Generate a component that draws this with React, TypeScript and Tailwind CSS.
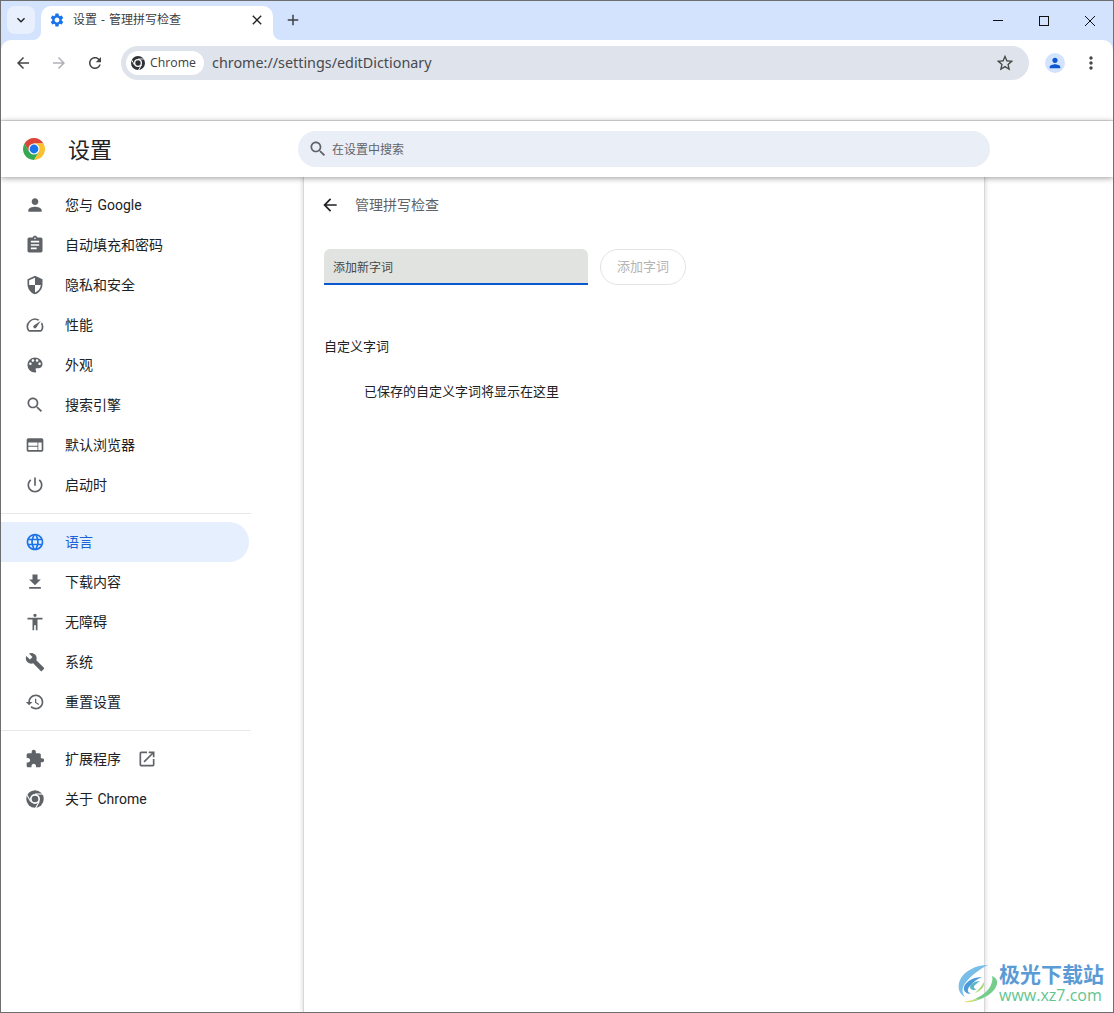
import { ReactNode } from 'react';

const Icon = ({ d, className = '' }: { d: string; className?: string }) => (
  <svg viewBox="0 0 24 24" fill="currentColor" className={className}>
    <path d={d} />
  </svg>
);

const paths = {
  person: 'M12 12c2.21 0 4-1.79 4-4s-1.79-4-4-4-4 1.79-4 4 1.79 4 4 4zm0 2c-2.67 0-8 1.34-8 4v2h16v-2c0-2.66-5.33-4-8-4z',
  assignment: 'M19 3h-4.18C14.4 1.84 13.3 1 12 1c-1.3 0-2.4.84-2.82 2H5c-1.1 0-2 .9-2 2v14c0 1.1.9 2 2 2h14c1.1 0 2-.9 2-2V5c0-1.1-.9-2-2-2zm-7 0c.55 0 1 .45 1 1s-.45 1-1 1-1-.45-1-1 .45-1 1-1zm2 14H7v-2h7v2zm3-4H7v-2h10v2zm0-4H7V7h10v2z',
  shield: 'M12 1L3 5v6c0 5.55 3.84 10.74 9 12 5.16-1.26 9-6.45 9-12V5l-9-4zm0 10.99h7c-.53 4.12-3.28 7.79-7 8.94V12H5V6.3l7-3.11v8.8z',
  speed: 'M20.38 8.57l-1.23 1.85a8 8 0 0 1-.22 7.58H5.07A8 8 0 0 1 15.58 6.85l1.85-1.23A10 10 0 0 0 3.35 19a2 2 0 0 0 1.72 1h13.85a2 2 0 0 0 1.74-1 10 10 0 0 0-.27-10.44zm-9.79 6.84a2 2 0 0 0 2.83 0l5.66-8.49-8.49 5.66a2 2 0 0 0 0 2.83z',
  palette: 'M12 3c-4.97 0-9 4.03-9 9s4.03 9 9 9c.83 0 1.5-.67 1.5-1.5 0-.39-.15-.74-.39-1.01-.23-.26-.38-.61-.38-.99 0-.83.67-1.5 1.5-1.5H16c2.76 0 5-2.24 5-5 0-4.42-4.03-8-9-8zm-5.5 9c-.83 0-1.5-.67-1.5-1.5S5.67 9 6.5 9 8 9.67 8 10.5 7.33 12 6.5 12zm3-4C8.67 8 8 7.33 8 6.5S8.67 5 9.5 5s1.5.67 1.5 1.5S10.33 8 9.5 8zm5 0c-.83 0-1.5-.67-1.5-1.5S13.67 5 14.5 5s1.5.67 1.5 1.5S15.33 8 14.5 8zm3 4c-.83 0-1.5-.67-1.5-1.5S16.67 9 17.5 9s1.5.67 1.5 1.5-.67 1.5-1.5 1.5z',
  search: 'M15.5 14h-.79l-.28-.27C15.41 12.59 16 11.11 16 9.5 16 5.91 13.09 3 9.5 3S3 5.91 3 9.5 5.91 16 9.5 16c1.61 0 3.09-.59 4.23-1.57l.27.28v.79l5 4.99L20.49 19l-4.99-5zm-6 0C7.01 14 5 11.99 5 9.5S7.01 5 9.5 5 14 7.01 14 9.5 11.99 14 9.5 14z',
  web: 'M20 4H4c-1.1 0-2 .9-2 2v12c0 1.1.9 2 2 2h16c1.1 0 2-.9 2-2V6c0-1.1-.9-2-2-2zm-5 14H4v-4h11v4zm0-5H4V9h11v4zm5 5h-4V9h4v9z',
  power: 'M13 3h-2v10h2V3zm4.83 2.17l-1.42 1.42C17.99 7.86 19 9.81 19 12c0 3.87-3.13 7-7 7s-7-3.13-7-7c0-2.19 1.01-4.14 2.58-5.42L6.17 5.17C4.23 6.82 3 9.26 3 12c0 4.97 4.03 9 9 9s9-4.03 9-9c0-2.74-1.23-5.18-3.17-6.83z',
  language: 'M11.99 2C6.47 2 2 6.48 2 12s4.47 10 9.99 10C17.52 22 22 17.52 22 12S17.52 2 11.99 2zm6.93 6h-2.95c-.32-1.25-.78-2.45-1.38-3.56 1.84.63 3.37 1.91 4.33 3.56zM12 4.04c.83 1.2 1.48 2.53 1.91 3.96h-3.82c.43-1.43 1.08-2.76 1.91-3.96zM4.26 14C4.1 13.36 4 12.69 4 12s.1-1.36.26-2h3.38c-.08.66-.14 1.32-.14 2 0 .68.06 1.34.14 2H4.26zm.82 2h2.95c.32 1.25.78 2.45 1.38 3.56-1.84-.63-3.37-1.9-4.33-3.56zm2.95-8H5.08c.96-1.66 2.49-2.93 4.33-3.56C8.81 5.55 8.35 6.75 8.03 8zM12 19.96c-.83-1.2-1.48-2.53-1.91-3.96h3.82c-.43 1.43-1.08 2.76-1.91 3.96zM14.34 14H9.66c-.09-.66-.16-1.32-.16-2 0-.68.07-1.35.16-2h4.68c.09.65.16 1.32.16 2 0 .68-.07 1.34-.16 2zm.25 5.56c.6-1.11 1.06-2.31 1.38-3.56h2.95c-.96 1.65-2.49 2.93-4.33 3.56zM16.36 14c.08-.66.14-1.32.14-2 0-.68-.06-1.34-.14-2h3.38c.16.64.26 1.31.26 2s-.1 1.36-.26 2h-3.38z',
  download: 'M19 9h-4V3H9v6H5l7 7 7-7zM5 18v2h14v-2H5z',
  accessibility: 'M12 2c1.1 0 2 .9 2 2s-.9 2-2 2-2-.9-2-2 .9-2 2-2zm9 7h-6v13h-2v-6h-2v6H9V9H3V7h18v2z',
  build: 'M22.7 19l-9.1-9.1c.9-2.3.4-5-1.5-6.9-2-2-5-2.4-7.4-1.3L9 6 6 9 1.6 4.7C.4 7.1.9 10.1 2.9 12.1c1.9 1.9 4.6 2.4 6.9 1.5l9.1 9.1c.4.4 1 .4 1.4 0l2.3-2.3c.5-.4.5-1.1.1-1.4z',
  restore: 'M13 3c-4.97 0-9 4.03-9 9H1l3.89 3.89.07.14L9 12H6c0-3.87 3.13-7 7-7s7 3.13 7 7-3.13 7-7 7c-1.93 0-3.68-.79-4.94-2.06l-1.42 1.42C8.27 19.99 10.51 21 13 21c4.97 0 9-4.03 9-9s-4.03-9-9-9zm-1 5v5l4.28 2.54.72-1.21-3.5-2.08V8H12z',
  extension: 'M20.5 11H19V7c0-1.1-.9-2-2-2h-4V3.5C13 2.12 11.88 1 10.5 1S8 2.12 8 3.5V5H4c-1.1 0-1.99.9-1.99 2v3.8H3.5c1.49 0 2.7 1.21 2.7 2.7s-1.21 2.7-2.7 2.7H2V20c0 1.1.9 2 2 2h3.8v-1.5c0-1.49 1.21-2.7 2.7-2.7 1.49 0 2.7 1.21 2.7 2.7V22H17c1.1 0 2-.9 2-2v-4h1.5c1.38 0 2.5-1.12 2.5-2.5S21.88 11 20.5 11z',
  openInNew: 'M19 19H5V5h7V3H5c-1.11 0-2 .9-2 2v14c0 1.1.89 2 2 2h14c1.1 0 2-.9 2-2v-7h-2v7zM14 3v2h3.59l-9.83 9.83 1.41 1.41L19 6.41V10h2V3h-7z',
  back: 'M20 11H7.83l5.59-5.59L12 4l-8 8 8 8 1.41-1.41L7.83 13H20v-2z',
  forward: 'M12 4l-1.41 1.41L16.17 11H4v2h12.17l-5.58 5.59L12 20l8-8z',
  reload: 'M17.65 6.35C16.2 4.9 14.21 4 12 4c-4.42 0-7.99 3.58-7.99 8s3.57 8 7.99 8c3.73 0 6.84-2.55 7.73-6h-2.08c-.82 2.33-3.04 4-5.65 4-3.31 0-6-2.69-6-6s2.69-6 6-6c1.66 0 3.14.69 4.22 1.78L13 11h7V4l-2.35 2.35z',
  star: 'M22 9.24l-7.19-.62L12 2 9.19 8.63 2 9.24l5.46 4.73L5.82 21 12 17.27 18.18 21l-1.63-7.03L22 9.24zM12 15.4l-3.76 2.27 1-4.28-3.32-2.88 4.38-.38L12 6.1l1.71 4.04 4.38.38-3.32 2.88 1 4.28L12 15.4z',
  gear: 'M19.14 12.94c.04-.3.06-.61.06-.94 0-.32-.02-.64-.07-.94l2.03-1.58c.18-.14.23-.41.12-.61l-1.92-3.32c-.12-.22-.37-.29-.59-.22l-2.39.96c-.5-.38-1.03-.7-1.62-.94l-.36-2.54c-.04-.24-.24-.41-.48-.41h-3.84c-.24 0-.43.17-.47.41l-.36 2.54c-.59.24-1.13.57-1.62.94l-2.39-.96c-.22-.08-.47 0-.59.22L2.74 8.87c-.12.21-.08.47.12.61l2.03 1.58c-.05.3-.09.63-.09.94s.02.64.07.94l-2.03 1.58c-.18.14-.23.41-.12.61l1.92 3.32c.12.22.37.29.59.22l2.39-.96c.5.38 1.03.7 1.62.94l.36 2.54c.05.24.24.41.48.41h3.84c.24 0 .44-.17.47-.41l.36-2.54c.59-.24 1.13-.56 1.62-.94l2.39.96c.22.08.47 0 .59-.22l1.92-3.32c.12-.22.07-.47-.12-.61l-2.01-1.58zM12 15.6c-1.98 0-3.6-1.62-3.6-3.6s1.62-3.6 3.6-3.6 3.6 1.62 3.6 3.6-1.62 3.6-3.6 3.6z',
  close: 'M19 6.41L17.59 5 12 10.59 6.41 5 5 6.41 10.59 12 5 17.59 6.41 19 12 13.41 17.59 19 19 17.59 13.41 12z',
  plus: 'M19 13h-6v6h-2v-6H5v-2h6V5h2v6h6v2z',
  chevron: 'M7.41 8.59L12 13.17l4.59-4.58L18 10l-6 6-6-6z',
  dots: 'M12 8c1.1 0 2-.9 2-2s-.9-2-2-2-2 .9-2 2 .9 2 2 2zm0 2c-1.1 0-2 .9-2 2s.9 2 2 2 2-.9 2-2-.9-2-2-2zm0 6c-1.1 0-2 .9-2 2s.9 2 2 2 2-.9 2-2-.9-2-2-2z',
};

const ChromeLogo = ({ className = '' }: { className?: string }) => (
  <svg viewBox="0 0 48 48" className={className}>
    <path fill="#db4437" d="M4.95 13A22 22 0 0 1 43.05 13H24L14.47 29.5Z" />
    <path fill="#fbc02d" d="M43.05 13A22 22 0 0 1 24 46L33.53 29.5 24 13Z" />
    <path fill="#34a853" d="M24 46A22 22 0 0 1 4.95 13L14.47 29.5H33.53Z" />
    <circle cx="24" cy="24" r="11" fill="#fff" />
    <circle cx="24" cy="24" r="8.8" fill="#1a73e8" />
  </svg>
);

// single colour chrome mark, same one in the omnibox chip and the sidebar
const ChromeMono = ({ className = '' }: { className?: string }) => (
  <svg viewBox="0 0 24 24" className={className}>
    <circle cx="12" cy="12" r="10.5" fill="currentColor" />
    <circle cx="12" cy="12" r="6" fill="#fff" />
    <circle cx="12" cy="12" r="4" fill="currentColor" />
    <path d="M12 6H22" stroke="#fff" strokeWidth="1.3" />
    <path d="M12 6H22" stroke="#fff" strokeWidth="1.3" transform="rotate(120 12 12)" />
    <path d="M12 6H22" stroke="#fff" strokeWidth="1.3" transform="rotate(240 12 12)" />
  </svg>
);

type NavEntry = { label: string; icon: ReactNode; active?: boolean; external?: boolean };

const iconCls = 'w-5 h-5';
const groupOne: NavEntry[] = [
  { label: '您与 Google', icon: <Icon d={paths.person} className={iconCls} /> },
  { label: '自动填充和密码', icon: <Icon d={paths.assignment} className={iconCls} /> },
  { label: '隐私和安全', icon: <Icon d={paths.shield} className={iconCls} /> },
  { label: '性能', icon: <Icon d={paths.speed} className={iconCls} /> },
  { label: '外观', icon: <Icon d={paths.palette} className={iconCls} /> },
  { label: '搜索引擎', icon: <Icon d={paths.search} className={iconCls} /> },
  { label: '默认浏览器', icon: <Icon d={paths.web} className={iconCls} /> },
  { label: '启动时', icon: <Icon d={paths.power} className={iconCls} /> },
];
const groupTwo: NavEntry[] = [
  { label: '语言', icon: <Icon d={paths.language} className={iconCls} />, active: true },
  { label: '下载内容', icon: <Icon d={paths.download} className={iconCls} /> },
  { label: '无障碍', icon: <Icon d={paths.accessibility} className={iconCls} /> },
  { label: '系统', icon: <Icon d={paths.build} className={iconCls} /> },
  { label: '重置设置', icon: <Icon d={paths.restore} className={iconCls} /> },
];
const groupThree: NavEntry[] = [
  { label: '扩展程序', icon: <Icon d={paths.extension} className={iconCls} />, external: true },
  { label: '关于 Chrome', icon: <ChromeMono className={iconCls} /> },
];

const NavItem = ({ item }: { item: NavEntry }) => (
  <div
    className={`flex items-center h-10 w-[248px] pl-[24px] rounded-r-full text-sm [word-spacing:1px] font-['Roboto','Noto_Sans_CJK_SC',sans-serif] ${
      item.active ? 'bg-[#e6effd] text-[#1a62d6]' : 'text-[#202124]'
    }`}
  >
    <span className={`flex items-center justify-center w-5 h-5 ${item.active ? 'text-[#1a73e8]' : 'text-[#5f6368]'}`}>
      {item.icon}
    </span>
    <span className="ml-[20px]">{item.label}</span>
    {item.external && <Icon d={paths.openInNew} className="w-5 h-5 ml-[16px] text-[#5f6368]" />}
  </div>
);

const Divider = () => <div className="h-px w-[250px] bg-[#e8e8e8]" />;

const Watermark = () => (
  <div className="absolute right-[9px] bottom-[4px] flex items-center">
    <svg viewBox="0 0 50 50" className="w-[50px] h-[50px] -mr-[3px]">
      <path fill="#79bde9" d="M36 7C24 7 12 13 8 22 5 29 7 36 13 39 9 34 10 28 15 23 20 17 28 11 36 7Z" />
      <path fill="#4c9bd8" d="M30 19C22 19 14 23 12 29 11 33 14 36 19 36 15 34 15 31 18 28 21 24 25 21 30 19Z" />
      <path fill="#5fb6c9" d="M28 23C23 23 18 26 18 29 18 32 22 33 25 31 22 31 21 29 23 27Z" />
      <path fill="#74cd8c" d="M40 18C46 20 47 26 42 32 36 39 26 43 17 44 25 40 34 36 38 29 40 25 41 21 40 18Z" />
      <path fill="#a4d873" d="M32 24C33 29 28 33 23 35 27 31 30 28 32 24Z" />
      <path fill="#d6e36a" d="M28 40C23 43 17 45 12 44 15 43 21 42 28 40Z" />
    </svg>
    <div className="flex flex-col">
      <div className="text-[21px] leading-[24px] font-bold text-[#5b9bd5]">极光下载站</div>
      <div className="text-[16px] leading-[18px] font-medium text-[#62c48f] font-['Open_Sans',sans-serif]">www.xz7.com</div>
    </div>
  </div>
);

const App = () => {
  return (
    <div className="relative w-[1114px] h-[1013px] overflow-hidden border border-[#6e6e6e] bg-white flex flex-col font-['Noto_Sans','Noto_Sans_CJK_SC',sans-serif]">
      {/* stray pixels on the window edge */}
      <div className="absolute -left-px top-[124px] w-px h-[16px] bg-[#9a2b3a]" />

      {/* tab strip */}
      <div className="h-[39px] bg-[#d3e3fd] flex items-end shrink-0 pl-[6px]">
        <div className="mb-[6px] w-7 h-7 rounded-lg bg-[#e8f0fe] flex items-center justify-center text-[#202124]">
          <Icon d={paths.chevron} className="w-4 h-4" />
        </div>
        <div className="relative ml-[6px] w-[232px] h-[34px] bg-white rounded-t-[10px] flex items-center pl-[8px] pr-[8px] pb-[6px]">
          <span className="absolute -left-[8px] bottom-0 w-2 h-2 bg-white">
            <span className="block w-2 h-2 bg-[#d3e3fd] rounded-br-[8px]" />
          </span>
          <span className="absolute -right-[8px] bottom-0 w-2 h-2 bg-white">
            <span className="block w-2 h-2 bg-[#d3e3fd] rounded-bl-[8px]" />
          </span>
          <Icon d={paths.gear} className="w-4 h-4 text-[#1a73e8]" />
          <span className="ml-[8px] text-xs text-[#3c4043] flex-1 [word-spacing:1px]">设置 - 管理拼写检查</span>
          <Icon d={paths.close} className="w-4 h-4 text-[#202124]" />
        </div>
        <Icon d={paths.plus} className="mb-[11px] ml-[11px] w-[18px] h-[18px] text-[#3c4043]" />
        <div className="flex-1" />
        <div className="flex items-center h-full text-[#202124]">
          <div className="w-[46px] flex justify-center">
            <span className="block w-[10px] h-px bg-[#111]" />
          </div>
          <div className="w-[46px] flex justify-center">
            <span className="block w-[10px] h-[10px] border border-[#111]" />
          </div>
          <div className="w-[46px] flex justify-center">
            <svg viewBox="0 0 10 10" className="w-[10px] h-[10px]" stroke="#111" strokeWidth="1">
              <path d="M0 0L10 10M10 0L0 10" />
            </svg>
          </div>
        </div>
      </div>

      {/* toolbar */}
      <div className="bg-[#d3e3fd] shrink-0">
        <div className="bg-white rounded-t-[10px] h-[81px] border-b border-[#e0e0e0]">
          <div className="h-[46px] flex items-center pl-[10px]">
            <div className="flex items-center gap-[12px] text-[#444746]">
              <Icon d={paths.back} className="w-[24px] h-[24px] p-[3px]" />
              <Icon d={paths.forward} className="w-[24px] h-[24px] p-[3px] text-[#b0b2b6]" />
              <Icon d={paths.reload} className="w-[24px] h-[24px] p-[3px]" />
            </div>
            <div className="ml-[14px] w-[908px] h-[34px] rounded-full bg-[#dfe3eb] flex items-center pl-[5px] pr-[14px]">
              <div className="h-[24px] w-[78px] rounded-full bg-white flex items-center pl-[4px] text-[12.3px] text-[#3c4043]">
                <ChromeMono className="w-4 h-4 text-[#303134]" />
                <span className="ml-[4px] pt-px font-['Open_Sans',sans-serif]">Chrome</span>
              </div>
              <span className="ml-[8px] flex-1 text-[14.35px] text-[#474a4f]">chrome://settings/editDictionary</span>
              <Icon d={paths.star} className="w-5 h-5 text-[#444746]" />
            </div>
            <div className="ml-[16px] w-5 h-5 rounded-full bg-[#d3e3fd] flex items-center justify-center">
              <Icon d={paths.person} className="w-4 h-4 text-[#0b57d0]" />
            </div>
            <Icon d={paths.dots} className="ml-[16px] w-5 h-5 text-[#444746]" />
          </div>
        </div>
      </div>

      {/* settings header */}
      <div className="relative z-10 h-[56px] shrink-0 bg-white flex items-center pl-[21px] shadow-[0_1px_6px_rgba(0,0,0,0.4)]">
        <ChromeLogo className="w-6 h-6" />
        <span className="ml-[22px] text-[22px] text-[#202124]">设置</span>
        <div className="ml-[186px] w-[692px] h-[36px] rounded-full bg-[#eaeef7] flex items-center pl-[10px]">
          <Icon d={paths.search} className="w-[20px] h-[20px] text-[#5f6368]" />
          <span className="ml-[4px] pt-[2px] text-xs text-[#5f6368]">在设置中搜索</span>
        </div>
      </div>

      {/* body */}
      <div className="flex flex-1 min-h-0">
        <aside className="w-[302px] shrink-0 pt-[8px] flex flex-col">
          {groupOne.map((item) => (
            <NavItem key={item.label} item={item} />
          ))}
          <div className="my-2">
            <Divider />
          </div>
          {groupTwo.map((item) => (
            <NavItem key={item.label} item={item} />
          ))}
          <div className="my-2">
            <Divider />
          </div>
          {groupThree.map((item) => (
            <NavItem key={item.label} item={item} />
          ))}
        </aside>
        <main className="w-[682px] shrink-0 bg-white border-x border-[#d8d8d8] shadow-[0_0_5px_rgba(0,0,0,0.18)] pl-[20px]">
          <div className="h-[54px] mt-[1px] flex items-center">
            <Icon d={paths.back} className="w-5 h-5 text-[#202124] -ml-[4px]" />
            <span className="ml-[15px] text-sm text-[#5f6368]">管理拼写检查</span>
          </div>
          <div className="mt-[17px] flex items-start">
            <div className="w-[264px] h-[36px] bg-[#e1e3e0] rounded-t-[6px] border-b-2 border-[#0b57d0] flex items-center pl-[9px] pt-[3px] text-xs text-[#474747]">
              添加新字词
            </div>
            <div className="ml-[12px] w-[86px] h-[36px] rounded-full border border-[#e3e3e3] flex items-center justify-center text-[13px] text-[#b4b4b4]">
              添加字词
            </div>
          </div>
          <div className="mt-[52px] text-[13px] leading-[18px] text-[#202124]">自定义字词</div>
          <div className="mt-[27px] ml-[40px] text-[13px] leading-[18px] text-[#202124]">已保存的自定义字词将显示在这里</div>
        </main>
      </div>

      <Watermark />
    </div>
  );
};

export default App;
